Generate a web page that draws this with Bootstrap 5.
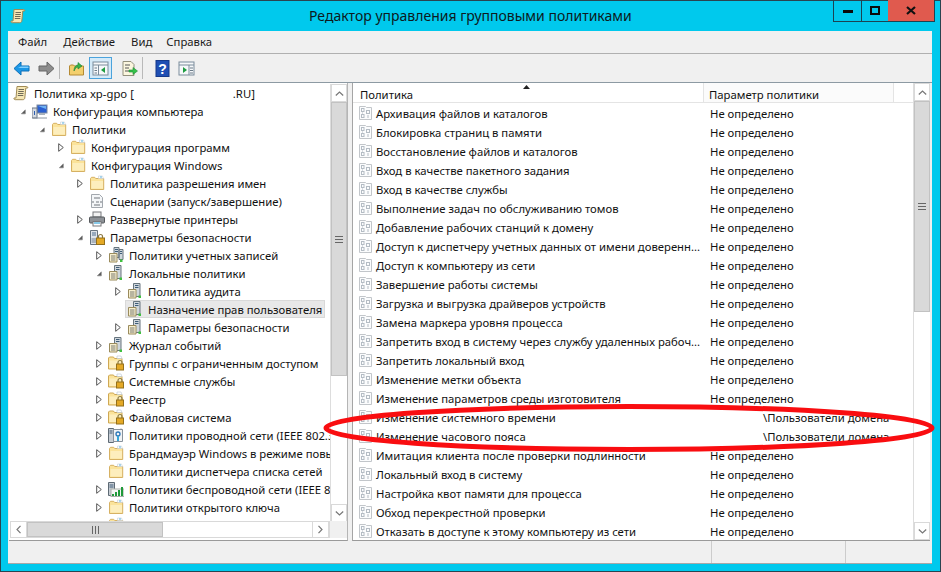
<!DOCTYPE html>
<html lang="ru">
<head>
<meta charset="utf-8">
<title>Редактор управления групповыми политиками</title>
<link href="https://cdn.jsdelivr.net/npm/bootstrap@5.3.0/dist/css/bootstrap.min.css" rel="stylesheet">
<style>
html,body{margin:0;height:572px;overflow:hidden;background:#00c9ed}
body{font-family:"Noto Sans","Open Sans",sans-serif;font-size:11.3px;line-height:18px;color:#111}
.win{box-sizing:border-box;position:relative;width:941px;height:572px;border:1px solid #2a4450;padding:0 8px 7px 7px}
.cap{height:30px}
.cap-title{font-size:14px;line-height:30px;color:#0d1a20;margin-left:283px}
.cap-ico{width:16px;height:16px;margin:7px 0 0 2px;flex:none}
.ctl{position:absolute;top:-1px;right:5px;display:flex;height:22px;border:1px solid #1c4352;border-top:0}
.ctl span{display:flex;align-items:center;justify-content:center;height:21px}
.c1{width:28px;border-right:1px solid #1c4352}.c2{width:26px}.c3{width:46px;background:#e05a4e}
.client{height:533px;background:#f0f0f0;border-bottom:1px solid #a8a8a8}
.menu{height:23px;border-bottom:1px solid #b0b0b0;padding-top:2px;color:#1a1a1a}
.m1{margin-left:10px}.m2{margin-left:16px}.m3{margin-left:16px}.m4{margin-left:14px}
.tools{height:29px;border-bottom:1px solid #8d9aa3;padding-left:5px}
.tb{width:17px;height:17px;display:block}
.tsep{width:1px;height:22px;background:#b9b9b9}
.tbtn{width:23px;height:22px;background:#d4eaf8;border:1px solid #4ba3dc;display:flex;align-items:center;justify-content:center}
.export-ic{margin-left:9px}.sep2{margin-left:4px}.help-ic{margin-left:11px}.cons-ic{margin-left:7px}
.panes{height:458px;gap:4px;padding-left:1px}
.pane{background:#fff;border-bottom:1px solid #9a9a9a;height:458px}
.tree-pane{width:339px;border-right:1px solid #b5b5b5}
.list-pane{width:578px;border-left:1px solid #a5a5a5}
.tree-top{height:439px;padding-top:1px}
.tree{width:321px;overflow:hidden;height:438px}
.trow{height:18px;display:flex;align-items:center;white-space:nowrap;padding-top:2px}
.arw{width:6px;height:9px;flex:none;margin-right:6px;margin-bottom:2px;display:block}
.nic{width:12px;flex:none}
.ico{width:16px;height:16px;flex:none;margin-right:5px;margin-bottom:2px;display:block}
.gap-dom{display:inline-block;width:99px}
.l0{padding-left:4px}.l1{padding-left:11px}.l2{padding-left:30px}.l3{padding-left:49px}.l4{padding-left:68px}.l5{padding-left:87px}.l6{padding-left:106px}
.sel{background:#e8e8e8;outline:1px solid #d9d9d9;outline-offset:-1px;margin-left:116px;padding-left:2px;width:200px}
.vs{width:17px;flex:none;display:flex;flex-direction:column;background:#fff;border-left:1px solid #ddd}
.vs-btn{height:18px;flex:none;border:1px solid #d9d9d9;display:flex;align-items:center;justify-content:center;background:#fff}
.vs-th{background:#d9d9d9;border:1px solid #c2c2c2;flex:none;display:flex;align-items:center;justify-content:center}
.th-a{height:274px}.th-b{height:211px}
.vs-tr{flex:1}
.hs{height:17px;background:#fff;width:338px;margin-top:-1px}
.hs-in{width:321px;border:1px solid #d9d9d9;border-left:0;margin-left:1px}
.hs-btn{width:17px;flex:none;display:flex;align-items:center;justify-content:center;border-left:1px solid #d9d9d9;border-right:1px solid #d9d9d9}
.hs-th{width:136px;background:#d9d9d9;border:1px solid #c2c2c2;display:flex;align-items:center;justify-content:center}
.hs-cor{width:17px;background:#f0f0f0}
.lst{width:561px;overflow:hidden}
.lhead{height:20px;background:#fff;border-bottom:1px solid #e4e4e4;position:relative}
.hc1{width:351px;padding-left:7px;line-height:24px;border-right:1px solid #e4e4e4}
.hc2{width:190px;padding-left:5px;line-height:24px;border-right:1px solid #e4e4e4;background:#fbfbfb}
.sort{position:absolute;left:170px;top:2px;width:7px;height:4px}
.lrow{height:19px;display:flex;align-items:center;white-space:nowrap;padding-top:2px}
.lc1{width:352px;padding-left:5px;display:flex;align-items:center;overflow:hidden;flex:none}
.lic{width:15px;height:16px;margin-right:3px;margin-bottom:2px;flex:none;display:block}
.lc2{padding-left:5px}
.dom{padding-left:58px}
.status{height:22px;background:#f0f0f0;margin-left:1px}
.st1{width:703px;border-right:1px solid #ccc}.st2{width:134px;border-right:1px solid #ccc}
.oval{position:absolute;left:0;top:0;width:941px;height:572px;pointer-events:none}
</style>
</head>
<body>
<svg width="0" height="0" class="d-block position-absolute">
<defs>
<symbol id="scroll" viewBox="0 0 16 16"><path d="M4 1.500h9.500c1 0 1.500.8 1.200 1.500h-1.900l-1 10c-.2 1.200-1 1.700-2 1.700H2.200c-1 0-1.500-.8-1.200-1.700h2z" fill="#f6e7b4" stroke="#a08a55"/><path d="M5.500 4.500h5.500M5.300 6.500h5.500M5 8.500h5.500M4.800 10.500h5.500" stroke="#6f6a58"/></symbol>
<symbol id="comp" viewBox="0 0 16 16"><rect x="5" y="2" width="10" height="8" fill="#2a5fd0" stroke="#7c8aa0"/><path d="M6 3h8v3z" fill="#6fb2f3"/><rect x="7" y="10" width="6" height="2" fill="#a9b2bc"/><rect x="0" y="5" width="5" height="10" fill="#d6dbe2" stroke="#6a7686"/><path d="M2.500 8v4" stroke="#2d5fb0"/><path d="M1 15h14" stroke="#8a94a0"/></symbol>
<symbol id="folder" viewBox="0 0 16 16"><path d="M1.500 14.500V3.500l1-1.200h3.200l1 1.200h8v11z" fill="#fbe39a" stroke="#d6b163"/><path d="M2.500 13.500V6h11.500v7.500z" fill="#fdeebd"/><path d="M9.500 1h4l1 2.500h-5z" fill="#fff" stroke="#c5ced6" stroke-width=".6"/><path d="M11 2h2" stroke="#5ab2e0"/></symbol>
<symbol id="lfolder" viewBox="0 0 16 16"><path d="M.5 14V3l1-1h4l1 1.500h7.500V14z" fill="#fbe39a" stroke="#cfa854"/><path d="M1.500 13V5.500h11.500V13z" fill="#fdeebd"/><path d="M9 1h4l1 2.500H9z" fill="#fff" stroke="#b6c5d2" stroke-width=".6"/><path d="M10 9V7.500a2 2 0 0 1 4 0V9" fill="none" stroke="#8a7a45" stroke-width="1.200"/><rect x="8.500" y="9" width="7" height="6" fill="#e4a926" stroke="#94701b"/></symbol>
<symbol id="script" viewBox="0 0 16 16"><path d="M2.500 1.500h8l3 3v10h-11z" fill="#f4f6f8" stroke="#a3a8ae"/><path d="M5 5h6M4.500 8l-1 1 1 1M7 9h3M11.500 8l1 1-1 1M5 12h6" stroke="#70767c" fill="none"/></symbol>
<symbol id="printer" viewBox="0 0 16 16"><rect x="4" y="1" width="8" height="5" fill="#f2f2f2" stroke="#77797c"/><rect x=".5" y="6" width="15" height="6" rx="1" fill="#8e9297" stroke="#55585c"/><rect x="4" y="10.500" width="8" height="4.500" fill="#fff" stroke="#77797c"/><path d="M5 12h6" stroke="#55b3e0" stroke-width="1.400"/></symbol>
<symbol id="srvlock" viewBox="0 0 16 16"><path d="M1.500 1.500h7v14h-7z" fill="#dfe4ea" stroke="#687480"/><path d="M3 4h4M3 6h4" stroke="#4f6f8f"/><rect x="2.500" y="9" width="5" height="5" fill="#aab3bd"/><path d="M9.500 9V7.500a2 2 0 0 1 4 0V9" fill="none" stroke="#8a7a45" stroke-width="1.200"/><rect x="7.500" y="9" width="8" height="6.500" fill="#e4a926" stroke="#94701b"/></symbol>
<symbol id="srv" viewBox="0 0 16 16"><path d="M6.500 .5h6.500v13H6.500z" fill="#cfd6dc" stroke="#68757e"/><path d="M8 2.500h3.500M8 4.500h3.500" stroke="#3e5d78"/><path d="M1.500 6.500h7.500v8.500H1.500z" fill="#f7efcf" stroke="#9a8b5c"/><path d="M3 9h4.500M3 11h4.500M3 13h4.500" stroke="#7b7a70"/><rect x="11.500" y="12.500" width="2.500" height="2.500" fill="#3fbf3f"/></symbol>
<symbol id="srv2" viewBox="0 0 16 16"><path d="M6 .5h5v10H6zM11 2.500h4v10h-4z" fill="#cfd6dc" stroke="#68757e"/><path d="M7 2.500h3M7 4.500h3M12 4.500h2M12 6.500h2" stroke="#3e5d78"/><path d="M1.500 6.500h7.500v8.500H1.500z" fill="#f7efcf" stroke="#9a8b5c"/><path d="M3 9h4.500M3 11h4.500M3 13h4.500" stroke="#7b7a70"/><rect x="12" y="12.500" width="2.500" height="2.500" fill="#3fbf3f"/></symbol>
<symbol id="wired" viewBox="0 0 16 16"><path d="M.5 1.500h5v14h-5z" fill="#c8ced5" stroke="#5e6a74"/><path d="M5.500 2.500h9v12h-9z" fill="#f1f3f5" stroke="#88929c"/><path d="M1.500 4h3M1.500 6h3" stroke="#3e5d78"/><circle cx="10" cy="7" r="2" fill="none" stroke="#2c77b8" stroke-width="1.300"/><path d="M10 9v5" stroke="#35a5d8" stroke-width="2"/><path d="M13 1.500l1.500 2" stroke="#888"/></symbol>
<symbol id="wifi" viewBox="0 0 16 16"><path d="M.5 1.500h6v13h-6z" fill="#c8ced5" stroke="#5e6a74"/><path d="M1.500 4h4M1.500 6h4" stroke="#3e5d78"/><rect x="3" y="8" width="13" height="7.500" fill="#f4f6f4" stroke="#a9b0a9"/><path d="M5 15v-2M8 15v-4M11 15v-6M14 15V6" stroke="#1f9a3a" stroke-width="2"/></symbol>
<symbol id="pol" viewBox="0 0 15 16"><path d="M1.500 1.500h6l1 1h5v12h-12z" fill="#fbfcfd" stroke="#c2c6ca"/><g fill="none" stroke="#b4bcc4"><rect x="3.500" y="3.500" width="2.500" height="3"/><rect x="3.500" y="9.500" width="2.500" height="3"/><rect x="8.500" y="5.500" width="3" height="3"/><path d="M10 10v3M4.500 7.500v1"/></g></symbol>
<symbol id="open" viewBox="0 0 6 9"><path d="M.7.7l4.600 3.800L.7 8.300z" fill="#fff" stroke="#555"/></symbol>
<symbol id="down" viewBox="0 0 9 9"><path d="M8 2v6H2z" fill="#555" stroke="#8a8a8a"/></symbol>
<symbol id="up" viewBox="0 0 9 5"><path d="M.8 4.500L4.500 1l3.700 3.500" fill="none" stroke="#777" stroke-width="1.200"/></symbol>
<symbol id="dn" viewBox="0 0 9 5"><path d="M.8.5L4.500 4l3.700-3.500" fill="none" stroke="#777" stroke-width="1.200"/></symbol>
<symbol id="lf" viewBox="0 0 5 9"><path d="M4.500.8L1 4.500l3.500 3.700" fill="none" stroke="#777" stroke-width="1.200"/></symbol>
<symbol id="rt" viewBox="0 0 5 9"><path d="M.5.8L4 4.500.5 8.200" fill="none" stroke="#777" stroke-width="1.200"/></symbol>
<symbol id="gv" viewBox="0 0 8 7"><path d="M0 .5h8M0 3.500h8M0 6.500h8" stroke="#666"/></symbol>
<symbol id="gh" viewBox="0 0 7 8"><path d="M.5 0v8M3.500 0v8M6.500 0v8" stroke="#666"/></symbol>
</defs>
</svg>

<div class="win">
  <div class="cap d-flex">
    <svg class="cap-ico"><use href="#scroll"/></svg>
    <div class="cap-title">Редактор управления групповыми политиками</div>
  </div>
  <div class="ctl">
    <span class="c1"><svg width="10" height="4"><rect width="10" height="3" y="1" fill="#0b0b0b"/></svg></span>
    <span class="c2"><svg width="10" height="9"><rect x="1" y="1" width="8" height="7" fill="none" stroke="#0b0b0b" stroke-width="2"/></svg></span>
    <span class="c3"><svg width="10" height="9"><path d="M1 1l8 7M9 1L1 8" stroke="#111" stroke-width="2.200"/></svg></span>
  </div>
  <div class="client">
    <div class="menu d-flex">
      <span class="m1">Файл</span><span class="m2">Действие</span><span class="m3">Вид</span><span class="m4">Справка</span>
    </div>
    <div class="tools d-flex align-items-center">
      <svg class="tb" viewBox="0 0 17 17"><path d="M1 8.500L8 2v4h8v5H8v4z" fill="#1b97e6" stroke="#0b6fb8"/><path d="M8 6.500h7.500V8H5z" fill="#7fd0ff"/></svg>
      <svg class="tb ms-2" viewBox="0 0 17 17"><path d="M16 8.500L9 2v4H1v5h8v4z" fill="#8d8d8d" stroke="#666"/></svg>
      <span class="tsep ms-1"></span>
      <svg class="tb ms-2" viewBox="0 0 17 17"><path d="M1.500 15V6l1-1h3l1 1h9v9z" fill="#f3cf6d" stroke="#b58a33"/><path d="M6 11c0-4 2-6 4-6V2.500l4 3.500-4 3V7c-2 0-3 2-4 4z" fill="#37b34a" stroke="#1f8030" stroke-width=".6"/></svg>
      <span class="tbtn ms-1"><svg class="tb" viewBox="0 0 17 17"><rect x="1" y="2" width="15" height="13" fill="#f6f8fa" stroke="#7b8c9b"/><path d="M1 5h15M6.500 5v10" stroke="#7b8c9b"/><path d="M2.500 8h2.500M2.500 10.500h2.500M2.500 13h2.500" stroke="#6a7a88"/><path d="M13 7v6l-4-3z" fill="#1e9c41"/></svg></span>
      <svg class="tb export-ic" viewBox="0 0 17 17"><path d="M2 1.500h8l3 3V15.500H2z" fill="#fbf6df" stroke="#93907c"/><path d="M4 5h5M4 8h4M4 11h4" stroke="#555"/><path d="M8 10h4V7.500l4.500 3.500-4.500 3.500V12H8z" fill="#35c24a" stroke="#1c8a30" stroke-width=".6"/></svg>
      <span class="tsep sep2"></span>
      <svg class="tb help-ic" viewBox="0 0 14 17"><rect x=".5" y=".5" width="13" height="16" fill="#1f4fb4" stroke="#15398a"/><text x="7" y="13.500" text-anchor="middle" font-size="14" font-weight="700" font-family="Liberation Sans" fill="#fff">?</text></svg>
      <svg class="tb cons-ic" viewBox="0 0 17 17"><rect x="1" y="2" width="15" height="13" fill="#f6f8fa" stroke="#7b8c9b"/><path d="M1 5h15M11 5v10" stroke="#7b8c9b"/><path d="M12 8h3M12 10.500h3M12 13h3" stroke="#6a7a88"/><path d="M5 7v6l4-3z" fill="#1e9c41"/></svg>
    </div>
    <div class="panes d-flex">
      <div class="pane tree-pane">
        <div class="tree-top d-flex">
          <div class="tree">
            <div class="trow l0"><svg class="ico"><use href="#scroll"/></svg>Политика xp-gpo [<span class="gap-dom"></span>.RU]</div>
            <div class="trow l1"><svg class="arw"><use href="#down"/></svg><svg class="ico"><use href="#comp"/></svg>Конфигурация компьютера</div>
            <div class="trow l2"><svg class="arw"><use href="#down"/></svg><svg class="ico"><use href="#folder"/></svg>Политики</div>
            <div class="trow l3"><svg class="arw"><use href="#open"/></svg><svg class="ico"><use href="#folder"/></svg>Конфигурация программ</div>
            <div class="trow l3"><svg class="arw"><use href="#down"/></svg><svg class="ico"><use href="#folder"/></svg>Конфигурация Windows</div>
            <div class="trow l4"><svg class="arw"><use href="#open"/></svg><svg class="ico"><use href="#folder"/></svg>Политика разрешения имен</div>
            <div class="trow l4"><span class="nic"></span><svg class="ico"><use href="#script"/></svg>Сценарии (запуск/завершение)</div>
            <div class="trow l4"><svg class="arw"><use href="#open"/></svg><svg class="ico"><use href="#printer"/></svg>Развернутые принтеры</div>
            <div class="trow l4"><svg class="arw"><use href="#down"/></svg><svg class="ico"><use href="#srvlock"/></svg>Параметры безопасности</div>
            <div class="trow l5"><svg class="arw"><use href="#open"/></svg><svg class="ico"><use href="#srv2"/></svg>Политики учетных записей</div>
            <div class="trow l5"><svg class="arw"><use href="#down"/></svg><svg class="ico"><use href="#srv"/></svg>Локальные политики</div>
            <div class="trow l6"><svg class="arw"><use href="#open"/></svg><svg class="ico"><use href="#srv"/></svg>Политика аудита</div>
            <div class="trow sel"><svg class="ico"><use href="#srv"/></svg>Назначение прав пользователя</div>
            <div class="trow l6"><svg class="arw"><use href="#open"/></svg><svg class="ico"><use href="#srv"/></svg>Параметры безопасности</div>
            <div class="trow l5"><svg class="arw"><use href="#open"/></svg><svg class="ico"><use href="#srv"/></svg>Журнал событий</div>
            <div class="trow l5"><svg class="arw"><use href="#open"/></svg><svg class="ico"><use href="#lfolder"/></svg>Группы с ограниченным доступом</div>
            <div class="trow l5"><svg class="arw"><use href="#open"/></svg><svg class="ico"><use href="#lfolder"/></svg>Системные службы</div>
            <div class="trow l5"><svg class="arw"><use href="#open"/></svg><svg class="ico"><use href="#lfolder"/></svg>Реестр</div>
            <div class="trow l5"><svg class="arw"><use href="#open"/></svg><svg class="ico"><use href="#lfolder"/></svg>Файловая система</div>
            <div class="trow l5"><svg class="arw"><use href="#open"/></svg><svg class="ico"><use href="#wired"/></svg>Политики проводной сети (IEEE 802.3)</div>
            <div class="trow l5"><svg class="arw"><use href="#open"/></svg><svg class="ico"><use href="#folder"/></svg>Брандмауэр Windows в режиме повышенной безопасности</div>
            <div class="trow l5"><span class="nic"></span><svg class="ico"><use href="#folder"/></svg>Политики диспетчера списка сетей</div>
            <div class="trow l5"><svg class="arw"><use href="#open"/></svg><svg class="ico"><use href="#wifi"/></svg>Политики беспроводной сети (IEEE 802.11)</div>
            <div class="trow l5"><svg class="arw"><use href="#open"/></svg><svg class="ico"><use href="#folder"/></svg>Политики открытого ключа</div>
            <div class="trow l5"><svg class="arw"><use href="#open"/></svg><svg class="ico"><use href="#folder"/></svg>Политики ограниченного использования</div>
          </div>
          <div class="vs">
            <div class="vs-btn"><svg width="9" height="5"><use href="#up"/></svg></div>
            <div class="vs-th th-a"><svg width="8" height="7"><use href="#gv"/></svg></div>
            <div class="vs-tr"></div>
            <div class="vs-btn"><svg width="9" height="5"><use href="#dn"/></svg></div>
          </div>
        </div>
        <div class="hs d-flex">
          <div class="hs-in d-flex flex-fill">
            <div class="hs-btn"><svg width="5" height="9"><use href="#lf"/></svg></div>
            <div class="hs-th"><svg width="7" height="8"><use href="#gh"/></svg></div>
            <div class="flex-fill"></div>
            <div class="hs-btn"><svg width="5" height="9"><use href="#rt"/></svg></div>
          </div>
          <div class="hs-cor"></div>
        </div>
      </div>
      <div class="pane list-pane d-flex">
        <div class="lst">
          <div class="lhead d-flex">
            <div class="hc1">Политика</div><div class="hc2">Параметр политики</div>
            <svg class="sort"><path d="M0 4L3.500 0 7 4z" fill="#222"/></svg>
          </div>
          <div class="lrow"><div class="lc1"><svg class="lic"><use href="#pol"/></svg>Архивация файлов и каталогов</div><div class="lc2">Не определено</div></div>
          <div class="lrow"><div class="lc1"><svg class="lic"><use href="#pol"/></svg>Блокировка страниц в памяти</div><div class="lc2">Не определено</div></div>
          <div class="lrow"><div class="lc1"><svg class="lic"><use href="#pol"/></svg>Восстановление файлов и каталогов</div><div class="lc2">Не определено</div></div>
          <div class="lrow"><div class="lc1"><svg class="lic"><use href="#pol"/></svg>Вход в качестве пакетного задания</div><div class="lc2">Не определено</div></div>
          <div class="lrow"><div class="lc1"><svg class="lic"><use href="#pol"/></svg>Вход в качестве службы</div><div class="lc2">Не определено</div></div>
          <div class="lrow"><div class="lc1"><svg class="lic"><use href="#pol"/></svg>Выполнение задач по обслуживанию томов</div><div class="lc2">Не определено</div></div>
          <div class="lrow"><div class="lc1"><svg class="lic"><use href="#pol"/></svg>Добавление рабочих станций к домену</div><div class="lc2">Не определено</div></div>
          <div class="lrow"><div class="lc1"><svg class="lic"><use href="#pol"/></svg>Доступ к диспетчеру учетных данных от имени доверенн...</div><div class="lc2">Не определено</div></div>
          <div class="lrow"><div class="lc1"><svg class="lic"><use href="#pol"/></svg>Доступ к компьютеру из сети</div><div class="lc2">Не определено</div></div>
          <div class="lrow"><div class="lc1"><svg class="lic"><use href="#pol"/></svg>Завершение работы системы</div><div class="lc2">Не определено</div></div>
          <div class="lrow"><div class="lc1"><svg class="lic"><use href="#pol"/></svg>Загрузка и выгрузка драйверов устройств</div><div class="lc2">Не определено</div></div>
          <div class="lrow"><div class="lc1"><svg class="lic"><use href="#pol"/></svg>Замена маркера уровня процесса</div><div class="lc2">Не определено</div></div>
          <div class="lrow"><div class="lc1"><svg class="lic"><use href="#pol"/></svg>Запретить вход в систему через службу удаленных рабоч...</div><div class="lc2">Не определено</div></div>
          <div class="lrow"><div class="lc1"><svg class="lic"><use href="#pol"/></svg>Запретить локальный вход</div><div class="lc2">Не определено</div></div>
          <div class="lrow"><div class="lc1"><svg class="lic"><use href="#pol"/></svg>Изменение метки объекта</div><div class="lc2">Не определено</div></div>
          <div class="lrow"><div class="lc1"><svg class="lic"><use href="#pol"/></svg>Изменение параметров среды изготовителя</div><div class="lc2">Не определено</div></div>
          <div class="lrow"><div class="lc1"><svg class="lic"><use href="#pol"/></svg>Изменение системного времени</div><div class="lc2 dom">\Пользователи домена</div></div>
          <div class="lrow"><div class="lc1"><svg class="lic"><use href="#pol"/></svg>Изменение часового пояса</div><div class="lc2 dom">\Пользователи домена</div></div>
          <div class="lrow"><div class="lc1"><svg class="lic"><use href="#pol"/></svg>Имитация клиента после проверки подлинности</div><div class="lc2">Не определено</div></div>
          <div class="lrow"><div class="lc1"><svg class="lic"><use href="#pol"/></svg>Локальный вход в систему</div><div class="lc2">Не определено</div></div>
          <div class="lrow"><div class="lc1"><svg class="lic"><use href="#pol"/></svg>Настройка квот памяти для процесса</div><div class="lc2">Не определено</div></div>
          <div class="lrow"><div class="lc1"><svg class="lic"><use href="#pol"/></svg>Обход перекрестной проверки</div><div class="lc2">Не определено</div></div>
          <div class="lrow"><div class="lc1"><svg class="lic"><use href="#pol"/></svg>Отказать в доступе к этому компьютеру из сети</div><div class="lc2">Не определено</div></div>
        </div>
        <div class="vs">
          <div class="vs-btn"><svg width="9" height="5"><use href="#up"/></svg></div>
          <div class="vs-th th-b"><svg width="8" height="7"><use href="#gv"/></svg></div>
          <div class="vs-tr"></div>
          <div class="vs-btn"><svg width="9" height="5"><use href="#dn"/></svg></div>
        </div>
      </div>
    </div>
    <div class="status d-flex"><div class="st1"></div><div class="st2"></div></div>
  </div>
  <svg class="oval"><ellipse cx="628" cy="427" rx="303" ry="21.500" fill="none" stroke="#f90d10" stroke-width="5"/></svg>
</div>
</body>
</html>
